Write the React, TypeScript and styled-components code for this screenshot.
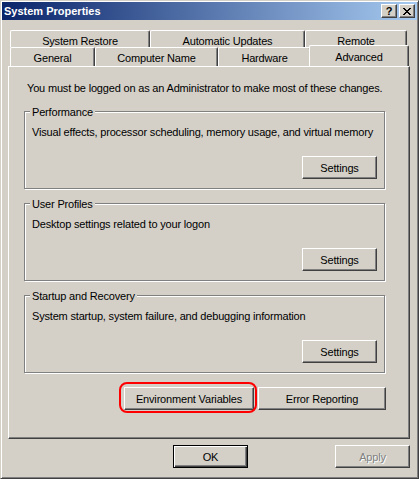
import styled, { createGlobalStyle, css } from 'styled-components';

const GlobalStyle = createGlobalStyle`
  html, body {
    margin: 0;
    padding: 0;
    background: #d4d0c8;
  }
  body {
    font-family: "Liberation Sans", Arial, sans-serif;
    font-size: 11px;
    letter-spacing: -0.18px;
    color: #000;
  }
`;

const Window = styled.div`
  box-sizing: border-box;
  width: 419px;
  height: 479px;
  padding: 1px;
  background: #d4d0c8;
  border: 1px solid;
  border-color: #d4d0c8 #404040 #404040 #d4d0c8;
  box-shadow: inset 1px 1px 0 #fff, inset -1px -1px 0 #808080;
  display: flex;
  flex-direction: column;
`;

const TitleBar = styled.div`
  height: 18px;
  display: flex;
  align-items: center;
  padding: 0 2px;
  background: linear-gradient(to right, #0a246a, #a6caf0);
  color: #fff;
  font-weight: bold;
  font-size: 11px;
  letter-spacing: 0;
`;

const Caption = styled.span`
  flex: 1;
`;

const CaptionButtons = styled.div`
  display: flex;
  gap: 2px;
`;

const CaptionButton = styled.div`
  box-sizing: border-box;
  width: 16px;
  height: 14px;
  background: #d4d0c8;
  border: 1px solid;
  border-color: #fff #404040 #404040 #fff;
  box-shadow: inset -1px -1px 0 #808080;
  display: flex;
  align-items: center;
  justify-content: center;
  color: #000;
  font-weight: bold;
  font-size: 11px;
  line-height: 12px;
`;

const Body = styled.div`
  flex: 1;
  display: flex;
  flex-direction: column;
  padding: 10px 0 0 6px;
`;

const TabRow = styled.div<{ $h: number }>`
  display: flex;
  height: ${(p) => p.$h}px;
  padding-left: 2px;
`;

const Tab = styled.div<{ $w: number; $pt: number; $selected?: boolean }>`
  box-sizing: border-box;
  width: ${(p) => p.$w}px;
  height: 100%;
  padding-top: ${(p) => p.$pt}px;
  text-align: center;
  line-height: 13px;
  background: #d4d0c8;
  border-top: 1px solid #fff;
  border-left: 1px solid #fff;
  border-right: 1px solid #404040;
  border-radius: 2px 2px 0 0;
  box-shadow: inset -1px 0 0 #808080;
  white-space: nowrap;
  ${(p) =>
    p.$selected &&
    css`
      position: relative;
      z-index: 1;
      width: ${p.$w + 4}px;
      height: 21px;
      margin: -2px -2px 0 -2px;
    `}
`;

const Panel = styled.div`
  box-sizing: border-box;
  width: 402px;
  height: 373px;
  border: 1px solid;
  border-color: #fff #404040 #404040 #fff;
  box-shadow: inset -1px -1px 0 #808080;
  padding: 15px 0 0 15px;
  display: flex;
  flex-direction: column;
`;

const Intro = styled.div`
  line-height: 13px;
  margin: 0 0 16px 3px;
  white-space: nowrap;
`;

const GroupBox = styled.div`
  position: relative;
  box-sizing: border-box;
  width: 361px;
  height: 78px;
  margin-bottom: 14px;
  padding: 14px 7px 0 7px;
  border: 1px solid #808080;
  box-shadow: inset 1px 1px 0 #fff, 1px 1px 0 #fff;
  display: flex;
  flex-direction: column;
  align-items: flex-start;
`;

const GroupTitle = styled.span`
  position: absolute;
  top: -6px;
  left: 5px;
  padding: 0 2px;
  line-height: 13px;
  background: #d4d0c8;
`;

const GroupText = styled.div`
  line-height: 13px;
  white-space: nowrap;
`;

const GroupActions = styled.div`
  align-self: stretch;
  display: flex;
  justify-content: flex-end;
  margin-top: 17px;
`;

const Button = styled.button<{ $w?: number; $default?: boolean }>`
  box-sizing: border-box;
  width: ${(p) => p.$w ?? 75}px;
  height: 23px;
  padding: 0;
  font-family: inherit;
  font-size: 11px;
  letter-spacing: inherit;
  color: #000;
  background: #d4d0c8;
  border: 1px solid;
  border-color: #fff #404040 #404040 #fff;
  box-shadow: inset -1px -1px 0 #808080;
  ${(p) =>
    p.$default &&
    css`
      border: 1px solid #000;
      box-shadow: inset 1px 1px 0 #fff, inset -1px -1px 0 #404040, inset -2px -2px 0 #808080;
    `}
  &:disabled {
    color: #808080;
    text-shadow: 1px 1px 0 #fff;
  }
`;

const ActionRow = styled.div`
  width: 362px;
  display: flex;
  justify-content: flex-end;
  gap: 4px;
  margin-top: 0;
`;

const Highlight = styled.span`
  position: relative;
  display: inline-flex;

  &::after {
    content: '';
    position: absolute;
    top: -5px;
    left: -5px;
    right: -3px;
    bottom: -3px;
    border: 2px solid #ff0000;
    border-radius: 8px;
    pointer-events: none;
  }
`;

const DialogButtons = styled.div`
  width: 402px;
  display: flex;
  justify-content: flex-end;
  gap: 6px;
  margin-top: 6px;
`;

const Spacer = styled.div`
  width: 75px;
`;

const tabsTop = [
  { label: 'System Restore', w: 140 },
  { label: 'Automatic Updates', w: 155 },
  { label: 'Remote', w: 102 },
];

const tabsBottom = [
  { label: 'General', w: 85 },
  { label: 'Computer Name', w: 123 },
  { label: 'Hardware', w: 93 },
  { label: 'Advanced', w: 96, selected: true },
];

const groups = [
  { title: 'Performance', text: 'Visual effects, processor scheduling, memory usage, and virtual memory' },
  { title: 'User Profiles', text: 'Desktop settings related to your logon' },
  { title: 'Startup and Recovery', text: 'System startup, system failure, and debugging information' },
];

function CloseGlyph() {
  const cells = [
    [0, 0], [1, 0], [6, 0], [7, 0],
    [1, 1], [2, 1], [5, 1], [6, 1],
    [2, 2], [3, 2], [4, 2], [5, 2],
    [3, 3], [4, 3],
    [2, 4], [3, 4], [4, 4], [5, 4],
    [1, 5], [2, 5], [5, 5], [6, 5],
    [0, 6], [1, 6], [6, 6], [7, 6],
  ];
  return (
    <svg width="8" height="7" viewBox="0 0 8 7" shapeRendering="crispEdges">
      {cells.map(([x, y]) => (
        <rect key={`${x}-${y}`} x={x} y={y} width="1" height="1" fill="#000" />
      ))}
    </svg>
  );
}

export default function App() {
  return (
    <>
      <GlobalStyle />
      <Window>
        <TitleBar>
          <Caption>System Properties</Caption>
          <CaptionButtons>
            <CaptionButton>?</CaptionButton>
            <CaptionButton>
              <CloseGlyph />
            </CaptionButton>
          </CaptionButtons>
        </TitleBar>

        <Body>
          <TabRow $h={17}>
            {tabsTop.map((t) => (
              <Tab key={t.label} $w={t.w} $pt={4}>
                {t.label}
              </Tab>
            ))}
          </TabRow>
          <TabRow $h={19}>
            {tabsBottom.map((t) => (
              <Tab key={t.label} $w={t.w} $pt={t.selected ? 5 : 4} $selected={t.selected}>
                {t.label}
              </Tab>
            ))}
          </TabRow>

          <Panel>
            <Intro>You must be logged on as an Administrator to make most of these changes.</Intro>
            {groups.map((g) => (
              <GroupBox key={g.title}>
                <GroupTitle>{g.title}</GroupTitle>
                <GroupText>{g.text}</GroupText>
                <GroupActions>
                  <Button>Settings</Button>
                </GroupActions>
              </GroupBox>
            ))}
            <ActionRow>
              <Highlight>
                <Button $w={130}>Environment Variables</Button>
              </Highlight>
              <Button $w={128}>Error Reporting</Button>
            </ActionRow>
          </Panel>

          <DialogButtons>
            <Button $default>OK</Button>
            <Spacer />
            <Button disabled>Apply</Button>
          </DialogButtons>
        </Body>
      </Window>
    </>
  );
}
